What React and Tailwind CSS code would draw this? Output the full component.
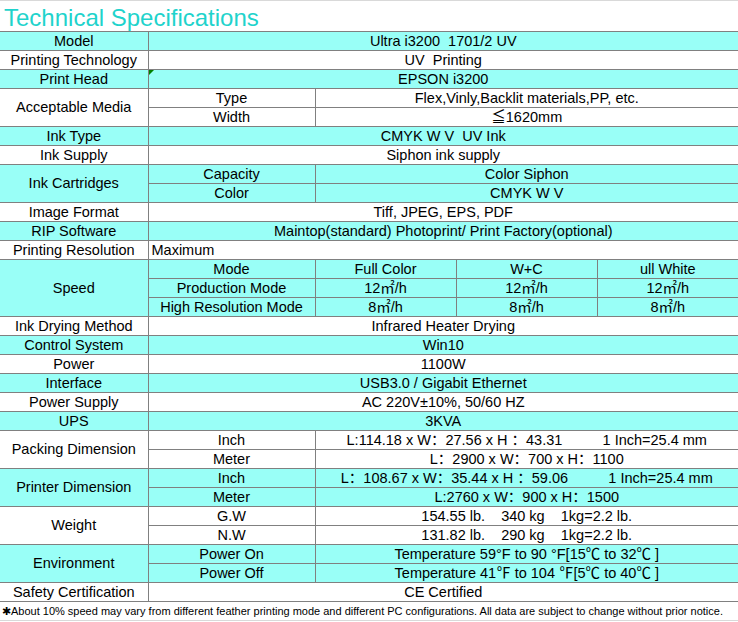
import React from 'react';

const font = { fontFamily: '"Liberation Sans", Arial, "Noto Sans CJK SC", sans-serif' };

const cell = 'border border-[#808080] p-0 text-center align-middle whitespace-pre text-[14.5px] leading-[17px] text-black';
const first = `${cell} border-l-0`;
const last = `${cell} border-r-0`;
const cyan = 'bg-[#99fff7]';

const Row = ({ bg, children }) => (
  <tr className={`h-[19px] ${bg ? cyan : 'bg-white'}`}>{children}</tr>
);

const m2 = (n) => `${n}㎡/h`;

const App = () => {
  return (
    <div className="w-[738px] h-[622px] bg-white overflow-hidden" style={font}>
      <div className="h-[31px] border-t border-[#d9d9d9] pl-[4px] pt-[3px] text-[24px] leading-[27px] text-[#1fd3cc]">
        Technical Specifications
      </div>

      <table className="w-[738px] table-fixed border-collapse">
        <colgroup>
          <col className="w-[148px]" />
          <col className="w-[167px]" />
          <col className="w-[141px]" />
          <col className="w-[141px]" />
          <col className="w-[141px]" />
        </colgroup>
        <tbody>
          <Row bg>
            <td className={first}>Model</td>
            <td className={last} colSpan={4}>Ultra i3200  1701/2 UV</td>
          </Row>
          <Row>
            <td className={first}>Printing Technology</td>
            <td className={last} colSpan={4}>UV  Printing</td>
          </Row>
          <Row bg>
            <td className={first}>Print Head</td>
            <td className={`${last} relative`} colSpan={4}>
              <span className="absolute left-0 top-0 w-0 h-0 border-t-[5px] border-t-[#008000] border-r-[5px] border-r-transparent" />
              EPSON i3200
            </td>
          </Row>

          {/* Acceptable Media */}
          <Row>
            <td className={first} rowSpan={2}>Acceptable Media</td>
            <td className={cell}>Type</td>
            <td className={`${last} text-[12.3px]`} colSpan={3}>Flex,Vinly,Backlit materials,PP, etc.</td>
          </Row>
          <Row>
            <td className={cell}>Width</td>
            <td className={last} colSpan={3}>≦1620mm</td>
          </Row>

          <Row bg>
            <td className={first}>Ink Type</td>
            <td className={last} colSpan={4}>CMYK W V  UV Ink</td>
          </Row>
          <Row>
            <td className={first}>Ink Supply</td>
            <td className={last} colSpan={4}>Siphon ink supply</td>
          </Row>

          {/* Ink Cartridges */}
          <Row bg>
            <td className={first} rowSpan={2}>Ink Cartridges</td>
            <td className={cell}>Capacity</td>
            <td className={last} colSpan={3}>Color Siphon</td>
          </Row>
          <Row bg>
            <td className={cell}>Color</td>
            <td className={last} colSpan={3}>CMYK W V</td>
          </Row>

          <Row>
            <td className={first}>Image Format</td>
            <td className={last} colSpan={4}>Tiff, JPEG, EPS, PDF</td>
          </Row>
          <Row bg>
            <td className={first}>RIP Software</td>
            <td className={last} colSpan={4}>Maintop(standard) Photoprint/ Print Factory(optional)</td>
          </Row>
          <Row>
            <td className={first}>Printing Resolution</td>
            <td className={`${last} text-left pl-[3px]`} colSpan={4}>Maximum</td>
          </Row>

          {/* Speed */}
          <Row bg>
            <td className={first} rowSpan={3}>Speed</td>
            <td className={cell}>Mode</td>
            <td className={cell}>Full Color</td>
            <td className={cell}>W+C</td>
            <td className={last}>ull White</td>
          </Row>
          <Row bg>
            <td className={cell}>Production Mode</td>
            <td className={cell}>{m2(12)}</td>
            <td className={cell}>{m2(12)}</td>
            <td className={last}>{m2(12)}</td>
          </Row>
          <Row bg>
            <td className={cell}>High Resolution Mode</td>
            <td className={cell}>{m2(8)}</td>
            <td className={cell}>{m2(8)}</td>
            <td className={last}>{m2(8)}</td>
          </Row>

          <Row>
            <td className={first}>Ink Drying Method</td>
            <td className={last} colSpan={4}>Infrared Heater Drying</td>
          </Row>
          <Row bg>
            <td className={first}>Control System</td>
            <td className={last} colSpan={4}>Win10</td>
          </Row>
          <Row>
            <td className={first}>Power</td>
            <td className={last} colSpan={4}>1100W</td>
          </Row>
          <Row bg>
            <td className={first}>Interface</td>
            <td className={last} colSpan={4}>USB3.0 / Gigabit Ethernet</td>
          </Row>
          <Row>
            <td className={first}>Power Supply</td>
            <td className={last} colSpan={4}>AC 220V±10%, 50/60 HZ</td>
          </Row>
          <Row bg>
            <td className={first}>UPS</td>
            <td className={last} colSpan={4}>3KVA</td>
          </Row>

          {/* Packing Dimension */}
          <Row>
            <td className={first} rowSpan={2}>Packing Dimension</td>
            <td className={cell}>Inch</td>
            <td className={last} colSpan={3}>L:114.18 x W：27.56 x H ：43.31          1 Inch=25.4 mm</td>
          </Row>
          <Row>
            <td className={cell}>Meter</td>
            <td className={last} colSpan={3}>L：2900 x W：700 x H：1100</td>
          </Row>

          {/* Printer Dimension */}
          <Row bg>
            <td className={first} rowSpan={2}>Printer Dimension</td>
            <td className={cell}>Inch</td>
            <td className={last} colSpan={3}>L：108.67 x W：35.44 x H ：59.06          1 Inch=25.4 mm</td>
          </Row>
          <Row bg>
            <td className={cell}>Meter</td>
            <td className={last} colSpan={3}>L:2760 x W：900 x H：1500</td>
          </Row>

          {/* Weight */}
          <Row>
            <td className={first} rowSpan={2}>Weight</td>
            <td className={cell}>G.W</td>
            <td className={last} colSpan={3}>154.55 lb.    340 kg    1kg=2.2 lb.</td>
          </Row>
          <Row>
            <td className={cell}>N.W</td>
            <td className={last} colSpan={3}>131.82 lb.    290 kg    1kg=2.2 lb.</td>
          </Row>

          {/* Environment */}
          <Row bg>
            <td className={first} rowSpan={2}>Environment</td>
            <td className={cell}>Power On</td>
            <td className={last} colSpan={3}>Temperature 59°F to 90 °F[15℃ to 32℃ ]</td>
          </Row>
          <Row bg>
            <td className={cell}>Power Off</td>
            <td className={last} colSpan={3}>Temperature 41℉ to 104 ℉[5℃ to 40℃ ]</td>
          </Row>

          <Row>
            <td className={first}>Safety Certification</td>
            <td className={last} colSpan={4}>CE Certified</td>
          </Row>
        </tbody>
      </table>

      <div className="h-[19px] border-b border-[#d9d9d9] pl-[2px] text-[11px] leading-[19px] text-black whitespace-nowrap">
        ✱About 10% speed may vary from different feather printing mode and different PC configurations. All data are subject to change without prior notice.
      </div>
    </div>
  );
};

export default App;
